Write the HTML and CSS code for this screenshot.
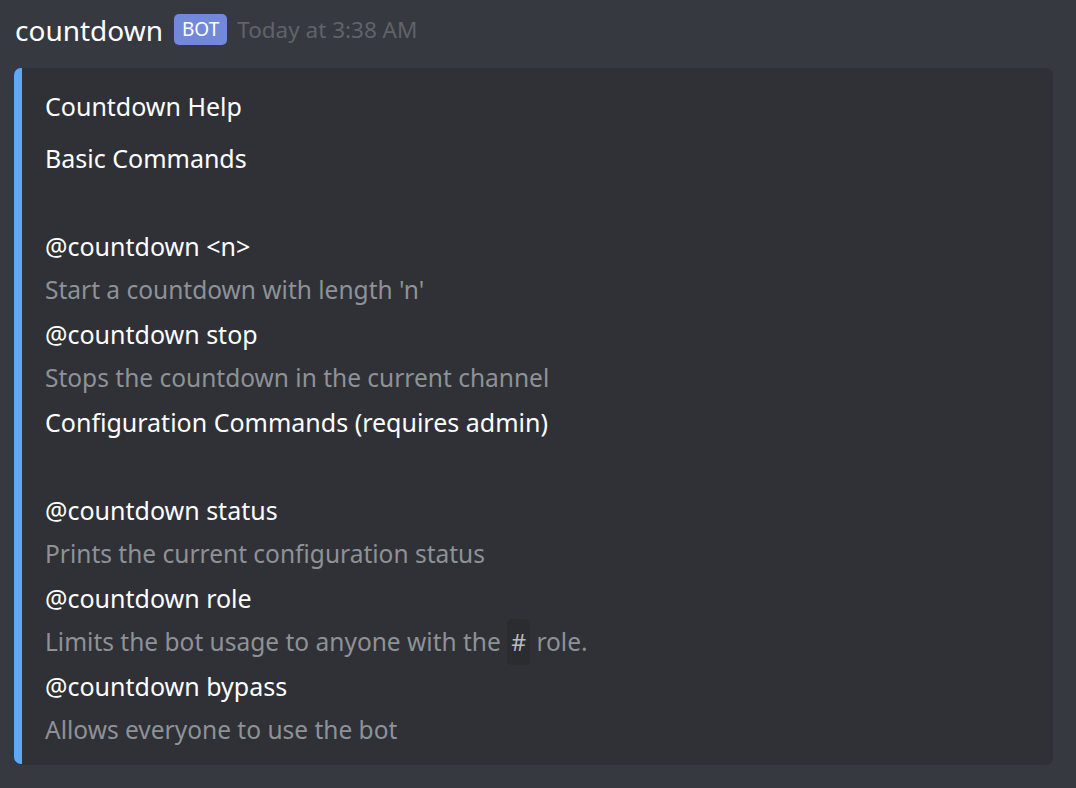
FILE: index.html
```html
<!DOCTYPE html>
<html>
<head>
<meta charset="utf-8">
<link rel="stylesheet" href="styles.css">
</head>
<body>
<div class="message">
  <div class="header">
    <span class="username">countdown</span>
    <span class="badge">BOT</span>
    <span class="timestamp">Today at 3:38 AM</span>
  </div>
  <div class="embed">
    <div class="embed-inner">
      <div class="title">Countdown Help</div>
      <div class="line name">Basic Commands</div>
      <div class="line blank"></div>
      <div class="line name">@countdown &lt;n&gt;</div>
      <div class="line desc">Start a countdown with length 'n'</div>
      <div class="line name">@countdown stop</div>
      <div class="line desc">Stops the countdown in the current channel</div>
      <div class="line name">Configuration Commands (requires admin)</div>
      <div class="line blank"></div>
      <div class="line name">@countdown status</div>
      <div class="line desc">Prints the current configuration status</div>
      <div class="line name">@countdown role</div>
      <div class="line desc">Limits the bot usage to anyone with the <code class="code">#</code> role.</div>
      <div class="line name">@countdown bypass</div>
      <div class="line desc">Allows everyone to use the bot</div>
    </div>
  </div>
</div>
</body>
</html>
```
FILE: styles.css
```css
html, body {
  margin: 0;
  padding: 0;
  background: #36393f;
  width: 1076px;
  height: 788px;
  overflow: hidden;
  font-family: "Noto Sans", "Open Sans", sans-serif;
}
.message {
  padding: 0 0 0 14px;
}
.header {
  display: flex;
  align-items: center;
  height: 58px;
  margin-left: 1px;
  padding-top: 1px;
  box-sizing: border-box;
}
.username {
  color: #ffffff;
  font-size: 28px;
  line-height: 32px;
}
.badge {
  margin-left: 11px;
  background: #7289da;
  color: #ffffff;
  font-size: 19px;
  line-height: 31px;
  height: 31px;
  padding: 0 8px;
  border-radius: 5px;
  margin-top: -1px;
}
.timestamp {
  margin-left: 10px;
  color: #5f636a;
  font-size: 22.5px;
  line-height: 31px;
}
.embed {
  margin-top: 10px;
  width: 1039px;
  background: #2f3136;
  border-left: 8px solid #5ea9f4;
  border-radius: 7px;
  box-sizing: border-box;
  box-shadow: 0 1px 0 rgba(0,0,0,0.15);
}
.embed-inner {
  padding: 18px 20px 12px 23px;
}
.title {
  color: #ffffff;
  font-size: 25px;
  line-height: 40px;
  margin-bottom: 10px;
}
.line {
  font-size: 25px;
  line-height: 44px;
  height: 44px;
}
.name {
  color: #ffffff;
}
.desc {
  color: #8e9297;
  font-size: 24.5px;
}
.code {
  font-family: "Noto Sans", sans-serif;
  background: #2a2c30;
  color: #b9bbbe;
  padding: 7px 4px;
  border-radius: 5px;
  font-size: 23px;
}
```
